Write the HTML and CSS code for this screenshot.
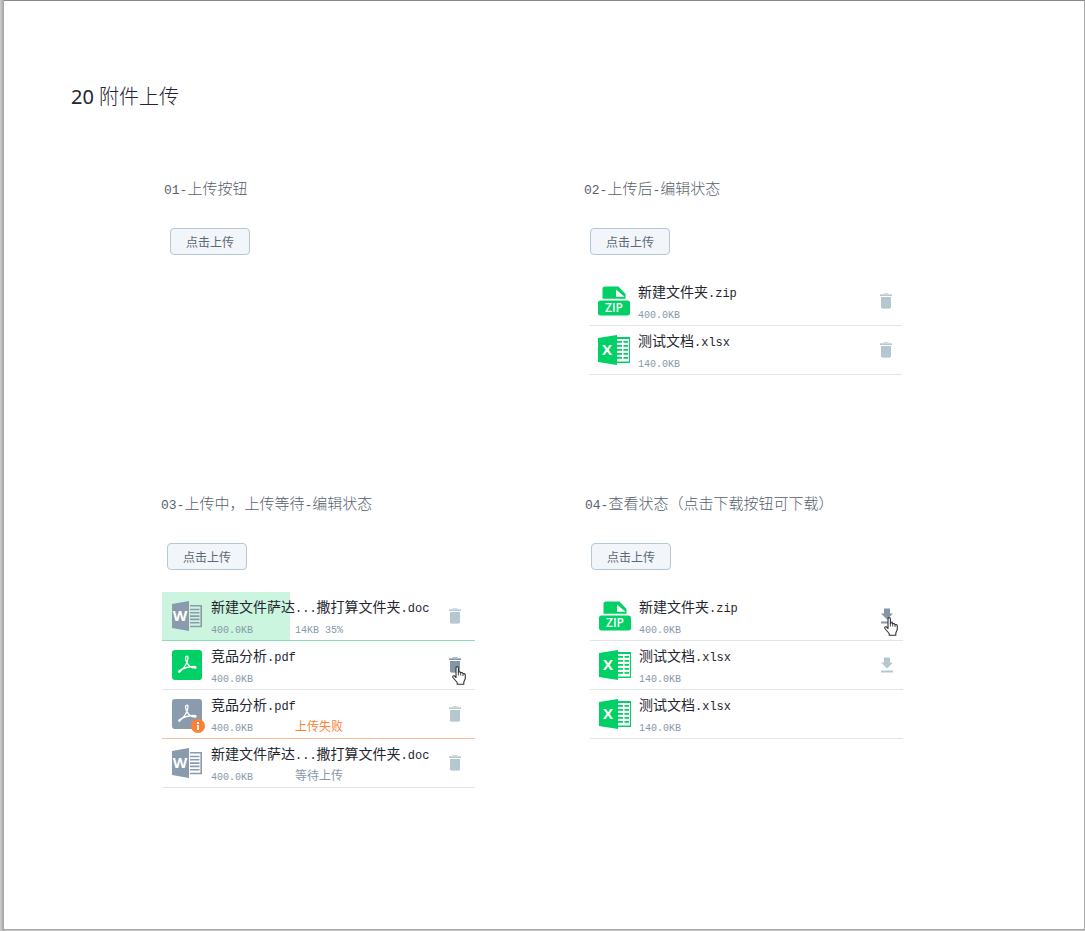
FILE: index.html
```html
<!DOCTYPE html>
<html lang="zh-CN">
<head>
<meta charset="utf-8">
<meta name="viewport" content="width=device-width, initial-scale=1">
<title>20 附件上传</title>
<link rel="stylesheet" href="styles.css">
</head>
<body>
<svg class="sprite" aria-hidden="true">
  <symbol id="zip" viewBox="0 0 32 30">
    <path fill="#00d066" d="M7 0.500H20.500L27.500 8V12.800H4.500V3Q4.500 0.500 7 0.500Z"/>
    <path fill="#fff" d="M18 3.500V10.800H26.500Z"/>
    <rect fill="#00d066" y="14.500" width="32" height="15" rx="2.500"/>
  </symbol>
  <symbol id="xlsx" viewBox="0 0 32 30">
    <path fill="#00d066" d="M0 3L19 0V30L0 27Z"/>
    <path fill="#00d066" d="M19 2H32V28H19Z"/>
    <path fill="#fff" d="M19 4H31V26.500H19Z"/>
    <path stroke="#00d066" stroke-width="1.700" d="M19 6.800H24M25.500 6.800H30M19 10.800H24M25.500 10.800H30M19 14.800H24M25.500 14.800H30M19 18.800H24M25.500 18.800H30M19 22.800H24M25.500 22.800H30"/>
  </symbol>
  <symbol id="doc" viewBox="0 0 30 30">
    <path fill="#8a9bad" d="M0 3L17 0V30L0 27Z"/>
    <path fill="none" stroke="#8a9bad" stroke-width="1.600" d="M18 4.800H29.200V25.500H18M18 8.500H27.500M18 11.800H27.500M18 15.100H27.500M18 18.400H27.500M18 21.700H27.500"/>
  </symbol>
  <symbol id="pdf" viewBox="0 0 30 30">
    <rect fill="currentColor" width="30" height="30" rx="3"/>
    <path fill="none" stroke="#fff" stroke-width="1.300" stroke-linejoin="round" d="M14 6.500Q16 5.500 16 8Q15.500 15 7.500 22.300Q5.800 22 7.500 20.500Q14 16.500 22.500 16.500Q25 17 23.500 18.200Q16.500 18 14 10.500Q13 7.500 14 6.500Z"/>
  </symbol>
  <symbol id="trash" viewBox="0 0 12 16">
    <path fill="currentColor" opacity=".65" d="M4 0H8L9 1H12V2H0V1H3ZM2 15H10V16H2Z"/>
    <path fill="currentColor" d="M0 2H12V3H0ZM1 4H11V14.500Q11 15 10.500 15H1.500Q1 15 1 14.500Z"/>
  </symbol>
  <symbol id="download" viewBox="0 0 12 16">
    <path fill="currentColor" d="M3 0.500H9V5.500H12L6 11.500L0 5.500H3ZM0 13.500H12V15.500H0Z"/>
  </symbol>
  <symbol id="hand" viewBox="0 0 14 19">
    <path fill="#fff" stroke="#333" stroke-width="1.100" stroke-linejoin="round" d="M4 11.500V2Q4 .600 5.200 .600T6.400 2V6.500Q7.600 5 8.700 6.800Q10.100 5.800 11 7.600Q13.300 6.900 13.300 9.500V12.500L11.800 16V18.300H5.200V16.500L.900 11.500Q.300 9.500 2.200 9.700Z"/>
    <path fill="none" stroke="#333" stroke-width=".900" d="M6.400 6V9.500M8.700 6.800V9.500M11 7.600V10"/>
  </symbol>
</svg>

<main class="sheet">
  <h1 class="title"><span class="number">20</span> 附件上传</h1>

  <div class="row row-first">
    <section class="panel">
      <h2 class="heading"><span class="latin">01-</span>上传按钮</h2>
      <button class="upload" type="button">点击上传</button>
    </section>

    <section class="panel">
      <h2 class="heading"><span class="latin">02-</span>上传后<span class="latin">-</span>编辑状态</h2>
      <button class="upload" type="button">点击上传</button>
      <ul class="files files-inset">
        <li class="file">
          <svg class="icon" viewBox="0 0 32 30"><use href="#zip"/><text class="mark mark-zip" x="16" y="26">ZIP</text></svg>
          <div class="info">
            <p class="name">新建文件夹<span class="latin">.zip</span></p>
            <p class="meta"><span class="size">400.0KB</span></p>
          </div>
          <button class="action" type="button" aria-label="删除"><svg class="glyph"><use href="#trash"/></svg></button>
        </li>
        <li class="file">
          <svg class="icon" viewBox="0 0 32 30"><use href="#xlsx"/><text class="mark mark-app" x="9" y="20">X</text></svg>
          <div class="info">
            <p class="name">测试文档<span class="latin">.xlsx</span></p>
            <p class="meta"><span class="size">140.0KB</span></p>
          </div>
          <button class="action" type="button" aria-label="删除"><svg class="glyph"><use href="#trash"/></svg></button>
        </li>
      </ul>
    </section>
  </div>

  <div class="row row-second">
    <section class="panel">
      <h2 class="heading"><span class="latin">03-</span>上传中，上传等待<span class="latin">-</span>编辑状态</h2>
      <button class="upload" type="button">点击上传</button>
      <ul class="files">
        <li class="file file-loading">
          <div class="progress" style="width: 41%"></div>
          <svg class="icon" viewBox="0 0 30 30"><use href="#doc"/><text class="mark mark-app" x="8" y="20">W</text></svg>
          <div class="info">
            <p class="name">新建文件萨达<span class="latin">...</span>撒打算文件夹<span class="latin">.doc</span></p>
            <p class="meta"><span class="size">400.0KB</span><span class="rate">14KB 35%</span></p>
          </div>
          <button class="action" type="button" aria-label="删除"><svg class="glyph"><use href="#trash"/></svg></button>
        </li>
        <li class="file">
          <svg class="icon icon-ready"><use href="#pdf"/></svg>
          <div class="info">
            <p class="name">竞品分析<span class="latin">.pdf</span></p>
            <p class="meta"><span class="size">400.0KB</span></p>
          </div>
          <button class="action action-hover" type="button" aria-label="删除"><svg class="glyph"><use href="#trash"/></svg><svg class="cursor"><use href="#hand"/></svg></button>
        </li>
        <li class="file file-failed">
          <span class="icon-wrap">
            <svg class="icon"><use href="#pdf"/></svg>
            <svg class="badge" viewBox="0 0 14 14"><circle cx="7" cy="7" r="7" fill="#ff8033"/><path fill="#fff" d="M6 3H8V5H6ZM6 6H8V11H6Z"/></svg>
          </span>
          <div class="info">
            <p class="name">竞品分析<span class="latin">.pdf</span></p>
            <p class="meta"><span class="size">400.0KB</span><span class="state state-failed">上传失败</span></p>
          </div>
          <button class="action" type="button" aria-label="删除"><svg class="glyph"><use href="#trash"/></svg></button>
        </li>
        <li class="file">
          <svg class="icon" viewBox="0 0 30 30"><use href="#doc"/><text class="mark mark-app" x="8" y="20">W</text></svg>
          <div class="info">
            <p class="name">新建文件萨达<span class="latin">...</span>撒打算文件夹<span class="latin">.doc</span></p>
            <p class="meta"><span class="size">400.0KB</span><span class="state">等待上传</span></p>
          </div>
          <button class="action" type="button" aria-label="删除"><svg class="glyph"><use href="#trash"/></svg></button>
        </li>
      </ul>
    </section>

    <section class="panel">
      <h2 class="heading"><span class="latin">04-</span>查看状态（点击下载按钮可下载）</h2>
      <button class="upload" type="button">点击上传</button>
      <ul class="files files-inset">
        <li class="file">
          <svg class="icon" viewBox="0 0 32 30"><use href="#zip"/><text class="mark mark-zip" x="16" y="26">ZIP</text></svg>
          <div class="info">
            <p class="name">新建文件夹<span class="latin">.zip</span></p>
            <p class="meta"><span class="size">400.0KB</span></p>
          </div>
          <button class="action action-hover" type="button" aria-label="下载"><svg class="glyph"><use href="#download"/></svg><svg class="cursor"><use href="#hand"/></svg></button>
        </li>
        <li class="file">
          <svg class="icon" viewBox="0 0 32 30"><use href="#xlsx"/><text class="mark mark-app" x="9" y="20">X</text></svg>
          <div class="info">
            <p class="name">测试文档<span class="latin">.xlsx</span></p>
            <p class="meta"><span class="size">140.0KB</span></p>
          </div>
          <button class="action" type="button" aria-label="下载"><svg class="glyph"><use href="#download"/></svg></button>
        </li>
        <li class="file">
          <svg class="icon" viewBox="0 0 32 30"><use href="#xlsx"/><text class="mark mark-app" x="9" y="20">X</text></svg>
          <div class="info">
            <p class="name">测试文档<span class="latin">.xlsx</span></p>
            <p class="meta"><span class="size">140.0KB</span></p>
          </div>
        </li>
      </ul>
    </section>
  </div>
</main>
</body>
</html>
```

FILE: styles.css
```css
* { box-sizing: border-box; }

body {
  display: flex;
  min-height: 100vh;
  margin: 0;
  padding: 0 0 1px 4px;
  background: linear-gradient(to right, #cfcfcf 0, #a0a0a0 4px, #c4c4c4 5px);
  font-family: "Noto Sans CJK SC", sans-serif;
}

h1, h2, p, ul { margin: 0; padding: 0; font-weight: 400; }
ul { list-style: none; }
svg { display: block; }

.sprite { position: absolute; width: 0; height: 0; }

.mark { fill: #fff; text-anchor: middle; font-family: "Open Sans", sans-serif; }
.mark-zip { font-size: 12px; font-weight: 600; }
.mark-app { font-size: 15px; font-weight: 700; }

.sheet {
  flex: 1;
  min-width: 0;
  padding: 82px 0 60px;
  border: solid #a8a8a8;
  border-width: 1px 1px 1px 0;
  border-top-color: #8a8888;
  background: #fff;
}

.title {
  padding-left: 67px;
  font-family: "Noto Sans", "Noto Sans CJK SC", sans-serif;
  font-size: 20px;
  font-weight: 300;
  line-height: 28px;
  color: #23262f;
}
.number { font-weight: 400; }

.row {
  display: grid;
  grid-template-columns: 1fr 1fr;
}
.row-first { margin-top: 67px; padding: 0 80px 0 160px; }
.row-second { margin-top: 118px; padding: 0 75px 0 157px; }

.panel { min-width: 0; }

.heading {
  font-size: 15px;
  line-height: 20px;
  color: #56616c;
  font-weight: 300;
}
.latin {
  font-family: "Liberation Mono", monospace;
  font-size: 12px;
  line-height: 1;
}
.heading .latin { font-size: 13px; }

.upload {
  display: block;
  height: 27px;
  margin: 30px 0 0 6px;
  padding: 0 15px;
  border: 1px solid #b5c8d2;
  border-radius: 4px;
  background: #f2f5fa;
  color: #5c6874;
  font-family: inherit;
  font-size: 12px;
  line-height: 24px;
}

.files {
  max-width: 314px;
  margin-top: 22px;
  padding-left: 1px;
}
.files-inset { max-width: 318px; padding-left: 5px; }

.file {
  position: relative;
  display: flex;
  align-items: center;
  height: 49px;
  padding: 0 14px 0 10px;
  border-bottom: 1px solid #dfe5e8;
}
.files-inset .file { padding: 0 10px 0 9px; }
.file-loading { border-color: #87dfb1; }
.file-failed { border-color: #ffbd94; }

.progress {
  position: absolute;
  inset: 0 auto 0 0;
  background: #cbf5df;
}

.icon { position: relative; flex: none; width: 30px; height: 30px; color: #8a9bad; }
.files-inset .icon { width: 32px; }
.icon-ready { color: #00d066; }
.icon-wrap { position: relative; }
.badge { position: absolute; right: -3px; bottom: -4px; width: 14px; height: 14px; }

.info { position: relative; flex: 1; min-width: 0; padding: 2px 0 0 9px; }
.files-inset .info { padding-left: 8px; }

.name {
  overflow: hidden;
  font-size: 14px;
  line-height: 20px;
  white-space: nowrap;
  color: #23262f;
}
.meta {
  margin-top: 2px;
  font-size: 12px;
  line-height: 20px;
  color: #8798a9;
}
.size, .rate {
  display: inline-block;
  font-family: "Liberation Mono", monospace;
  font-size: 10px;
  line-height: 1;
}
.size { width: 84px; }
.state-failed { color: #ff8033; }

.action {
  position: relative;
  flex: none;
  padding: 0;
  border: 0;
  background: none;
  color: #b6c7d0;
}
.action-hover { color: #8497a9; }
.glyph { width: 12px; height: 16px; }
.cursor { position: absolute; left: 3px; top: 9px; width: 14px; height: 19px; }
```
